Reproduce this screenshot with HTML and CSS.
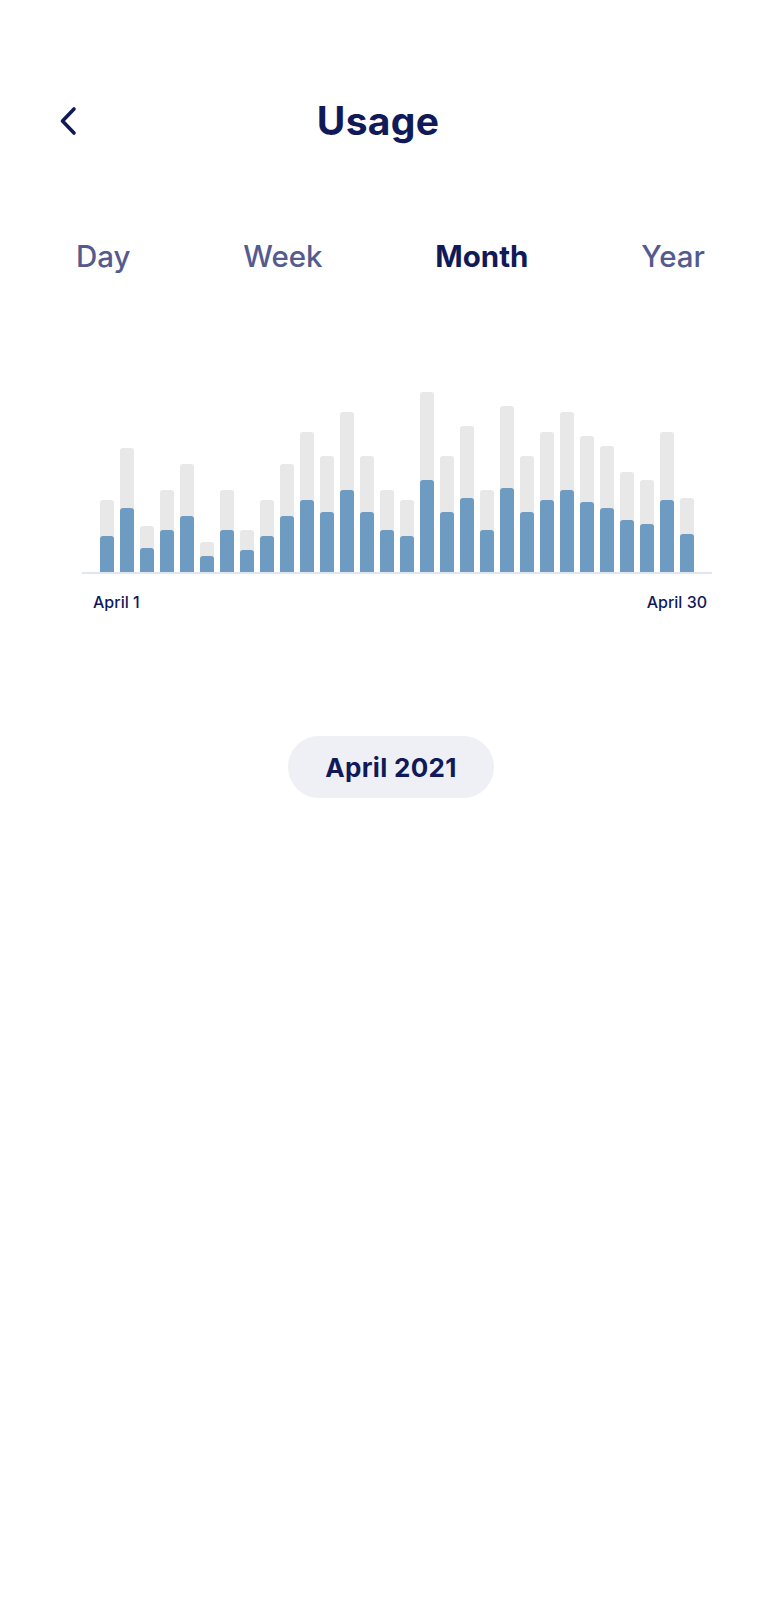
FILE: index.html
```html
<!DOCTYPE html>
<html lang="en">
<head>
<meta charset="utf-8">
<title>Usage</title>
<link rel="stylesheet" href="styles.css">
</head>
<body>
<div class="screen">
  <header class="header">
    <button class="back" aria-label="Back">
      <svg width="22" height="30" viewBox="0 0 22 30"><path d="M16 3 L4.5 15 L16 27" fill="none" stroke="#111a58" stroke-width="3.6" stroke-linecap="round" stroke-linejoin="round"/></svg>
    </button>
    <h1 class="title">Usage</h1>
  </header>

  <nav class="tabs">
    <span class="tab">Day</span>
    <span class="tab">Week</span>
    <span class="tab active">Month</span>
    <span class="tab">Year</span>
  </nav>

  <section class="chart">
    <div class="bars">
      <div class="bar" style="height:72px"><div class="fill" style="height:36px"></div></div>
      <div class="bar" style="height:124px"><div class="fill" style="height:64px"></div></div>
      <div class="bar" style="height:46px"><div class="fill" style="height:24px"></div></div>
      <div class="bar" style="height:82px"><div class="fill" style="height:42px"></div></div>
      <div class="bar" style="height:108px"><div class="fill" style="height:56px"></div></div>
      <div class="bar" style="height:30px"><div class="fill" style="height:16px"></div></div>
      <div class="bar" style="height:82px"><div class="fill" style="height:42px"></div></div>
      <div class="bar" style="height:42px"><div class="fill" style="height:22px"></div></div>
      <div class="bar" style="height:72px"><div class="fill" style="height:36px"></div></div>
      <div class="bar" style="height:108px"><div class="fill" style="height:56px"></div></div>
      <div class="bar" style="height:140px"><div class="fill" style="height:72px"></div></div>
      <div class="bar" style="height:116px"><div class="fill" style="height:60px"></div></div>
      <div class="bar" style="height:160px"><div class="fill" style="height:82px"></div></div>
      <div class="bar" style="height:116px"><div class="fill" style="height:60px"></div></div>
      <div class="bar" style="height:82px"><div class="fill" style="height:42px"></div></div>
      <div class="bar" style="height:72px"><div class="fill" style="height:36px"></div></div>
      <div class="bar" style="height:180px"><div class="fill" style="height:92px"></div></div>
      <div class="bar" style="height:116px"><div class="fill" style="height:60px"></div></div>
      <div class="bar" style="height:146px"><div class="fill" style="height:74px"></div></div>
      <div class="bar" style="height:82px"><div class="fill" style="height:42px"></div></div>
      <div class="bar" style="height:166px"><div class="fill" style="height:84px"></div></div>
      <div class="bar" style="height:116px"><div class="fill" style="height:60px"></div></div>
      <div class="bar" style="height:140px"><div class="fill" style="height:72px"></div></div>
      <div class="bar" style="height:160px"><div class="fill" style="height:82px"></div></div>
      <div class="bar" style="height:136px"><div class="fill" style="height:70px"></div></div>
      <div class="bar" style="height:126px"><div class="fill" style="height:64px"></div></div>
      <div class="bar" style="height:100px"><div class="fill" style="height:52px"></div></div>
      <div class="bar" style="height:92px"><div class="fill" style="height:48px"></div></div>
      <div class="bar" style="height:140px"><div class="fill" style="height:72px"></div></div>
      <div class="bar" style="height:74px"><div class="fill" style="height:38px"></div></div>
    </div>
    <div class="axis-labels">
      <span>April 1</span>
      <span>April 30</span>
    </div>
  </section>

  <div class="period-wrap">
    <button class="period">April 2021</button>
  </div>
</div>
</body>
</html>
```

FILE: styles.css
```css
* { box-sizing: border-box; }

html, body {
  margin: 0;
  padding: 0;
  background: #ffffff;
}

body {
  font-family: "Inter", "Noto Sans", sans-serif;
  color: #111a58;
}

.screen {
  width: 782px;
  min-height: 1624px;
}

.header {
  display: flex;
  align-items: center;
  padding: 99px 106px 0 58px;
  height: 143px;
}

.back {
  width: 22px;
  height: 30px;
  padding: 0;
  border: 0;
  background: none;
  display: flex;
}

.title {
  flex: 1;
  margin: 0;
  text-align: center;
  font-size: 39px;
  line-height: 44px;
  font-weight: 700;
  letter-spacing: 0.3px;
  color: #111a58;
}

.tabs {
  display: flex;
  justify-content: space-between;
  padding: 95px 77px 0 76px;
}

.tab {
  font-size: 29.5px;
  line-height: 36px;
  font-weight: 500;
  color: #545b8e;
}

.tab.active {
  font-weight: 700;
  color: #111a58;
}

.chart {
  margin: 100px 70px 0 82px;
}

.bars {
  display: flex;
  align-items: flex-end;
  gap: 6px;
  height: 200px;
  padding-left: 18px;
  border-bottom: 2px solid #e2e6f0;
}

.bar {
  width: 14px;
  background: #e8e8e8;
  border-radius: 3px 3px 0 0;
  display: flex;
  align-items: flex-end;
}

.fill {
  width: 100%;
  background: #6e9bc2;
  border-radius: 3px 3px 0 0;
}

.axis-labels {
  display: flex;
  justify-content: space-between;
  padding: 18px 5px 0 11px;
  font-size: 16px;
  line-height: 20px;
  font-weight: 500;
  color: #111a58;
}

.period-wrap {
  display: flex;
  justify-content: center;
  padding-top: 124px;
}

.period {
  width: 206px;
  height: 62px;
  border: 0;
  border-radius: 31px;
  background: #eff0f5;
  font-family: inherit;
  font-size: 26px;
  font-weight: 700;
  letter-spacing: 0.3px;
  color: #111a58;
}
```
